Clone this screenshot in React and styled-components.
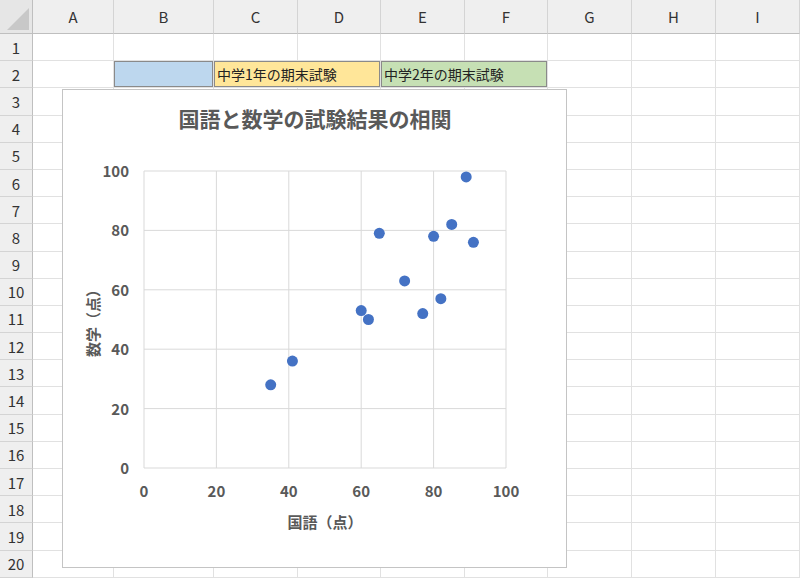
import React from 'react';
import styled, { createGlobalStyle } from 'styled-components';

const Global = createGlobalStyle`
  body { margin: 0; background: #fff; font-family: "Noto Sans CJK JP", "Liberation Sans", sans-serif; overflow: hidden; }
`;

const COLS = ['A', 'B', 'C', 'D', 'E', 'F', 'G', 'H', 'I'];
const WIDTHS = [81, 100, 84, 83, 84, 83, 84, 84, 84];

const Sheet = styled.div`
  position: relative;
  width: 800px;
  height: 587px;
  overflow: hidden;
  display: grid;
  grid-template-columns: 33px ${WIDTHS.map(w => w + 'px').join(' ')};
  grid-template-rows: 34px repeat(20, 27.2px);
`;

const Corner = styled.div`
  background: #e6e6e6;
  border-right: 1px solid #bfbfbf;
  border-bottom: 1px solid #bfbfbf;
  position: relative;
  &::after {
    content: '';
    position: absolute;
    right: 3px; bottom: 3px;
    border-left: 22px solid transparent;
    border-bottom: 22px solid #c8c8c8;
  }
`;

const ColHead = styled.div`
  background: #efefef;
  border-right: 1px solid #d4d4d4;
  border-bottom: 1px solid #bfbfbf;
  display: flex; align-items: center; justify-content: center;
  font-size: 15px; color: #333;
`;

const RowHead = styled.div`
  background: #efefef;
  border-right: 1px solid #bfbfbf;
  border-bottom: 1px solid #d4d4d4;
  display: flex; align-items: center; justify-content: center;
  font-size: 15px; color: #333;
`;

const Cell = styled.div`
  border-right: 1px solid #e1e1e1;
  border-bottom: 1px solid #e1e1e1;
  background: ${p => p.bg || '#fff'};
  ${p => p.bg && 'box-shadow: inset 0 0 0 1px #8a8a8a;'}
  grid-column: span ${p => p.span || 1};
  font-size: 14px; color: #222;
  display: flex; align-items: center; padding-left: 3px;
  white-space: nowrap; overflow: hidden;
`;

const Chart = styled.div`
  position: absolute;
  left: 62px; top: 89px;
  width: 503px; height: 477px;
  background: #fff;
  border: 1px solid #c4c4c4;
`;

const pts = [[35,28],[41,36],[60,53],[62,50],[65,79],[72,63],[77,52],[80,78],[82,57],[85,82],[89,98],[91,76]];
const X0 = 81, Y0 = 378, W = 362, H = 297;
const px = v => X0 + v * W / 100;
const py = v => Y0 - v * H / 100;
const ticks = [0, 20, 40, 60, 80, 100];

function ScatterChart() {
  return (
    <svg width="503" height="477" fontFamily='"Noto Sans CJK JP", "Liberation Sans", sans-serif'>
      <text x="252" y="37" textAnchor="middle" fontSize="21" fontWeight="bold" fill="#595959">国語と数学の試験結果の相関</text>
      {ticks.map(t => (
        <g key={t}>
          <line x1={px(t)} x2={px(t)} y1={py(100)} y2={Y0} stroke="#d9d9d9" />
          <line x1={X0} x2={px(100)} y1={py(t)} y2={py(t)} stroke="#d9d9d9" />
          <text x={X0 - 15} y={py(t) + 6} textAnchor="end" fontSize="15" fontWeight="bold" fill="#595959">{t}</text>
          <text x={px(t)} y={Y0 + 29} textAnchor="middle" fontSize="15" fontWeight="bold" fill="#595959">{t}</text>
        </g>
      ))}
      <text x={px(50)} y={Y0 + 60} textAnchor="middle" fontSize="15" fontWeight="bold" fill="#595959">国語（点）</text>
      <text transform={`translate(36 ${py(50)}) rotate(-90)`} textAnchor="middle" fontSize="15" fontWeight="bold" fill="#595959">数学（点）</text>
      {pts.map(([a, b], i) => (
        <circle key={i} cx={px(a)} cy={py(b)} r="5.5" fill="#4472c4" />
      ))}
    </svg>
  );
}

export default function App() {
  const rows = [];
  for (let r = 1; r <= 20; r++) {
    rows.push(<RowHead key={'h' + r}>{r}</RowHead>);
    if (r === 2) {
      rows.push(<Cell key="a2" />);
      rows.push(<Cell key="b2" bg="#bdd7ee" />);
      rows.push(<Cell key="c2" bg="#ffe699" span={2}>中学1年の期末試験</Cell>);
      rows.push(<Cell key="e2" bg="#c6e0b4" span={2}>中学2年の期末試験</Cell>);
      for (let c = 6; c < 9; c++) rows.push(<Cell key={'2-' + c} />);
    } else {
      COLS.forEach(c => rows.push(<Cell key={c + r} />));
    }
  }
  return (
    <>
      <Global />
      <Sheet>
        <Corner />
        {COLS.map(c => <ColHead key={c}>{c}</ColHead>)}
        {rows}
        <Chart><ScatterChart /></Chart>
      </Sheet>
    </>
  );
}
